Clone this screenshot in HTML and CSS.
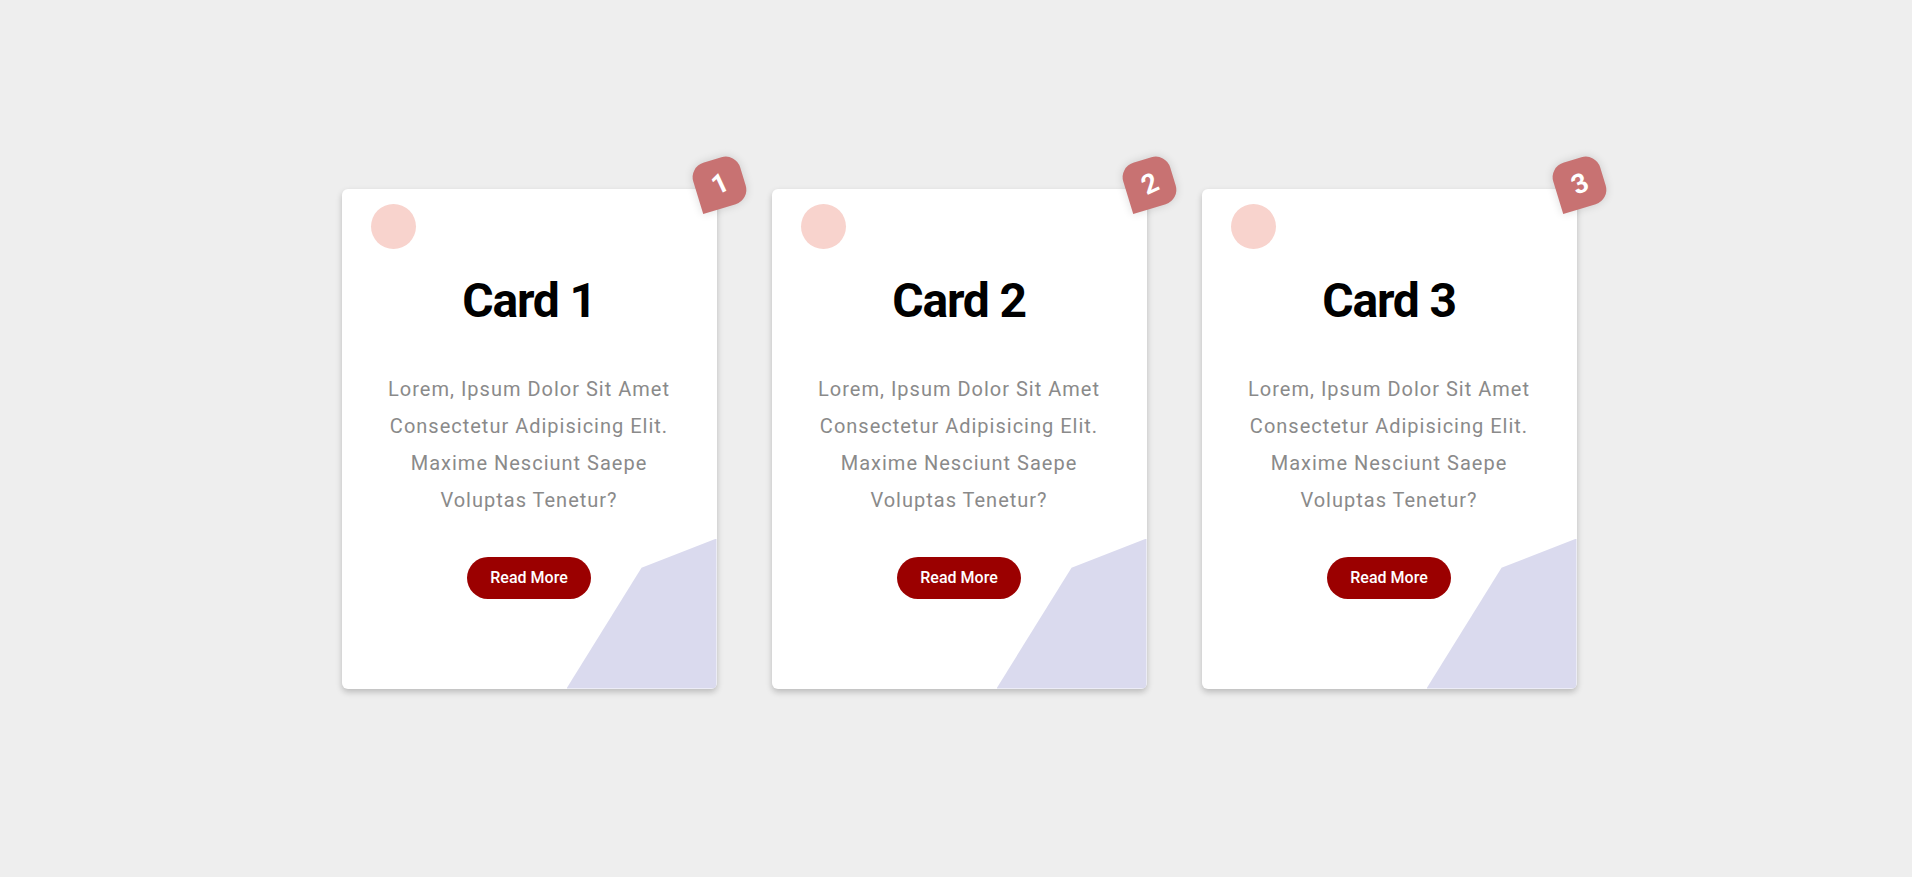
FILE: index.html
```html
<!DOCTYPE html>
<html lang="en">
<head>
<meta charset="utf-8">
<title>Cards</title>
<link rel="stylesheet" href="styles.css">
</head>
<body>
<main class="cards">
  <article class="card">
    <span class="badge"><span class="badge-num">1</span></span>
    <span class="dot"></span>
    <h2 class="card-title">Card 1</h2>
    <p class="card-text">Lorem, Ipsum Dolor Sit Amet Consectetur Adipisicing Elit. Maxime Nesciunt Saepe Voluptas Tenetur?</p>
    <a class="btn" href="#">Read More</a>
    <span class="shape"></span>
  </article>
  <article class="card">
    <span class="badge"><span class="badge-num">2</span></span>
    <span class="dot"></span>
    <h2 class="card-title">Card 2</h2>
    <p class="card-text">Lorem, Ipsum Dolor Sit Amet Consectetur Adipisicing Elit. Maxime Nesciunt Saepe Voluptas Tenetur?</p>
    <a class="btn" href="#">Read More</a>
    <span class="shape"></span>
  </article>
  <article class="card">
    <span class="badge"><span class="badge-num">3</span></span>
    <span class="dot"></span>
    <h2 class="card-title">Card 3</h2>
    <p class="card-text">Lorem, Ipsum Dolor Sit Amet Consectetur Adipisicing Elit. Maxime Nesciunt Saepe Voluptas Tenetur?</p>
    <a class="btn" href="#">Read More</a>
    <span class="shape"></span>
  </article>
</main>
</body>
</html>
```

FILE: styles.css
```css
* {
  box-sizing: border-box;
}

html, body {
  margin: 0;
  padding: 0;
}

body {
  background: #eeeeee;
  font-family: Roboto, "Liberation Sans", sans-serif;
  min-height: 100vh;
  display: flex;
  align-items: center;
  justify-content: center;
}

.cards {
  display: flex;
  gap: 55px;
  padding-left: 6px;
}

.card {
  position: relative;
  width: 375px;
  height: 500px;
  background: #ffffff;
  border-radius: 6px;
  box-shadow: 0 3px 6px rgba(0, 0, 0, 0.22);
  display: flex;
  flex-direction: column;
  align-items: center;
}

.dot {
  align-self: flex-start;
  width: 45px;
  height: 45px;
  margin: 15px 0 0 29px;
  border-radius: 50%;
  background: #f8d3cd;
}

.card-title {
  margin: 24px 0 0;
  font-size: 48px;
  line-height: 56px;
  font-weight: 700;
  letter-spacing: -1.2px;
  color: #000000;
}

.card-text {
  position: relative;
  z-index: 1;
  margin: 42px 0 0;
  max-width: 305px;
  text-align: center;
  font-size: 20px;
  line-height: 37px;
  letter-spacing: 1px;
  color: #8a8a8a;
}

.btn {
  position: relative;
  z-index: 1;
  margin-top: 38px;
  display: inline-block;
  height: 42px;
  padding: 0 23px;
  border-radius: 21px;
  background: #9b0000;
  color: #ffffff;
  font-size: 16px;
  font-weight: 500;
  line-height: 42px;
  text-decoration: none;
}

.shape {
  position: absolute;
  right: 0;
  bottom: 0;
  width: 150px;
  height: 150px;
  background: #dadaee;
  border-bottom-right-radius: 6px;
  clip-path: polygon(100% 0, 50% 19.5%, 0 100%, 100% 100%);
}

.badge {
  position: absolute;
  top: -30px;
  right: -27px;
  z-index: 2;
  width: 49px;
  height: 49px;
  background: #c87272;
  border-radius: 15px 15px 15px 0;
  transform: rotate(-17deg);
  box-shadow: 0 0 10px rgba(0, 0, 0, 0.14);
  display: flex;
  align-items: center;
  justify-content: center;
}

.badge-num {
  color: #ffffff;
  font-size: 27px;
  font-weight: 700;
  transform: rotate(-8deg);
}
```
